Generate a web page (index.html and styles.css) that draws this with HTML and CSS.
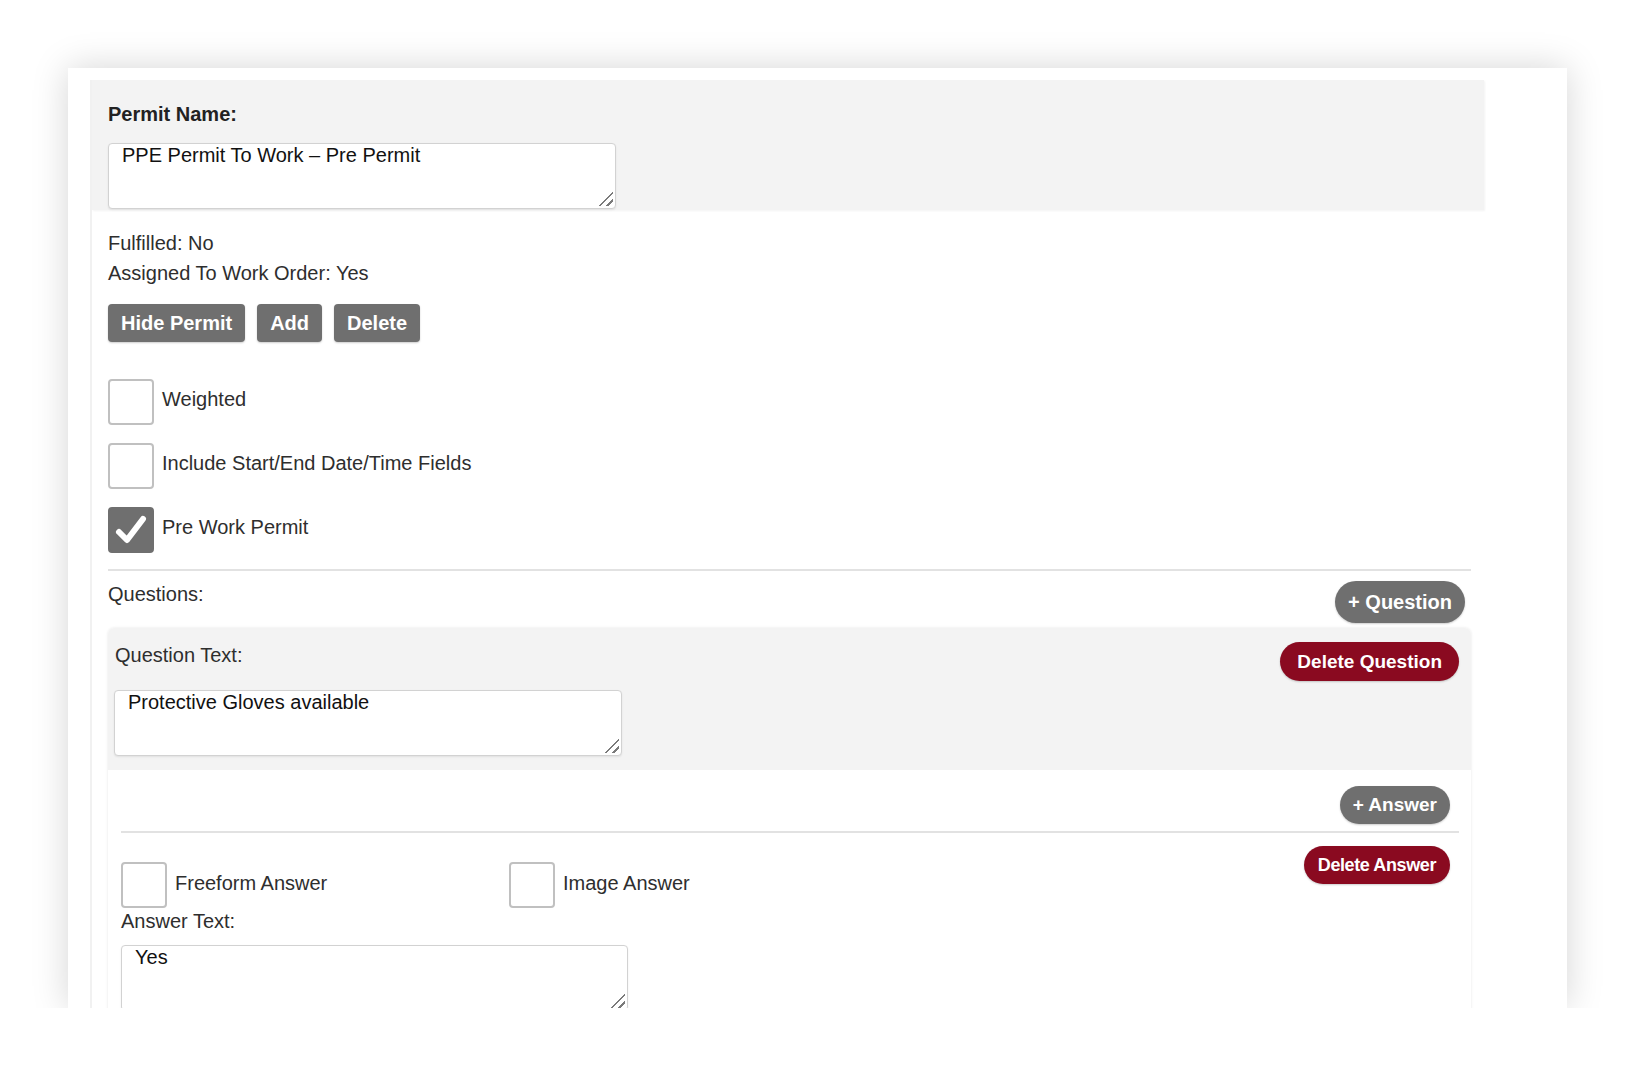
FILE: index.html
```html
<!DOCTYPE html>
<html lang="en">
    <head>
        <meta charset="UTF-8">
        <meta name="viewport" content="width=device-width, initial-scale=1.0">
        <title>Permit Editor</title>
        <link rel="stylesheet" href="styles.css">
    </head>
    <body>
        <div class="card">
            <div class="permit">
                <div class="permit-head">
                    <label class="field-label" for="permit-name">Permit Name:</label>
                    <div class="text-wrap">
                        <textarea id="permit-name" class="text-box">PPE Permit To Work – Pre Permit</textarea>
                    </div>
                </div>

                <div class="permit-body">
                    <p class="info">Fulfilled: No</p>
                    <p class="info">Assigned To Work Order: Yes</p>

                    <div class="actions">
                        <button class="btn">Hide Permit</button>
                        <button class="btn">Add</button>
                        <button class="btn">Delete</button>
                    </div>

                    <div class="options">
                        <label class="check"><span class="box"></span><span class="check-text">Weighted</span></label>
                        <label class="check"><span class="box"></span><span class="check-text">Include Start/End Date/Time Fields</span></label>
                        <label class="check">
                            <span class="box checked">
                                <svg viewBox="0 0 46 46" width="46" height="46"><path d="M11 25 L19 33 L35 12" fill="none" stroke="#fff" stroke-width="6" stroke-linecap="round" stroke-linejoin="round"/></svg>
                            </span>
                            <span class="check-text">Pre Work Permit</span>
                        </label>
                    </div>

                    <hr class="divider">

                    <div class="questions-head">
                        <span class="questions-title">Questions:</span>
                        <button class="pill pill-gray add-question">+ Question</button>
                    </div>

                    <!-- one question with its answers -->
                    <div class="question">
                        <div class="question-top">
                            <div class="question-row">
                                <span class="question-label">Question Text:</span>
                                <button class="pill pill-red delete-question">Delete Question</button>
                            </div>
                            <div class="text-wrap">
                                <textarea class="text-box">Protective Gloves available</textarea>
                            </div>
                        </div>

                        <div class="answers">
                            <div class="answers-head">
                                <button class="pill pill-gray add-answer">+ Answer</button>
                            </div>
                            <hr class="divider thin">

                            <div class="answer">
                                <div class="answer-main">
                                    <div class="answer-types">
                                        <label class="check answer-type"><span class="box"></span><span class="check-text">Freeform Answer</span></label>
                                        <label class="check answer-type"><span class="box"></span><span class="check-text">Image Answer</span></label>
                                    </div>
                                    <span class="answer-label">Answer Text:</span>
                                    <div class="text-wrap answer-text">
                                        <textarea class="text-box">Yes</textarea>
                                    </div>
                                </div>
                                <button class="pill pill-red delete-answer">Delete Answer</button>
                            </div>
                        </div>
                    </div>
                </div>
            </div>
        </div>
    </body>
</html>
```

FILE: styles.css
```css
/* Reset default styles */
* {
  margin: 0;
  padding: 0;
  box-sizing: border-box;
}

body {
  font-family: 'Liberation Sans', Arial, sans-serif;
  background-color: #ffffff;
  color: #2e2e2e;
  font-size: 20px;
  line-height: 23px;
  padding: 68px 0 0 68px;
}

/* Outer white sheet, content runs past the bottom */
.card {
  width: 1499px;
  height: 940px;
  background-color: #fff;
  box-shadow: 0 0 34px rgba(0, 0, 0, 0.17);
  overflow: hidden;
  padding-top: 12px;
}

.permit {
  width: 1394px;
  margin-left: 22px;
  border-left: 2px solid #f1f1f1;
  min-height: 960px;
}

.permit-head {
  background-color: #f3f3f3;
  box-shadow: 1px 1px 2px rgba(0, 0, 0, 0.05);
  padding: 23px 18px 1px 16px;
}

.field-label {
  display: block;
  font-weight: bold;
  color: #222;
  margin-bottom: 17px;
}

/* Textarea wrapper carries the resize grip */
.text-wrap {
  position: relative;
  width: 508px;
}

.text-wrap::after {
  content: '';
  position: absolute;
  right: 3px;
  bottom: 3px;
  width: 14px;
  height: 14px;
  pointer-events: none;
  background: linear-gradient(135deg,
    transparent 47%, #7a7a7a 47%, #7a7a7a 56%, transparent 56%,
    transparent 74%, #7a7a7a 74%, #7a7a7a 83%, transparent 83%);
}

.text-box {
  display: block;
  width: 100%;
  height: 66px;
  padding: 0 13px;
  border: 1px solid #d2d2d2;
  border-radius: 4px;
  box-shadow: 0 1px 2px rgba(0, 0, 0, 0.08);
  font-family: 'Liberation Sans', Arial, sans-serif;
  font-size: 20px;
  line-height: 23px;
  color: #111;
  background-color: #fff;
  outline: none;
  resize: none;
}

.permit-body {
  padding: 18px 13px 0 16px;
}

.info {
  line-height: 30px;
}

.actions {
  display: flex;
  gap: 12px;
  margin-top: 16px;
}

.btn {
  height: 38px;
  padding: 0 13px;
  background-color: #6f6f6f;
  color: #fff;
  border: none;
  border-radius: 4px;
  font-family: 'Liberation Sans', Arial, sans-serif;
  font-size: 20px;
  font-weight: bold;
  box-shadow: 0 1px 2px rgba(0, 0, 0, 0.2);
}

/* Checkbox rows */
.options {
  display: flex;
  flex-direction: column;
  gap: 18px;
  margin-top: 37px;
}

.check {
  display: flex;
  align-items: center;
  gap: 8px;
}

.check-text {
  margin-bottom: 6px;
}

.box {
  width: 46px;
  height: 46px;
  flex-shrink: 0;
  border: 2px solid #c0c0c0;
  border-radius: 4px;
  background-color: #fff;
}

.box.checked {
  background-color: #6f6f6f;
  border-color: #6f6f6f;
  position: relative;
}

.box.checked svg {
  position: absolute;
  top: -2px;
  left: -2px;
}

.divider {
  border: none;
  height: 2px;
  background-color: #e2e2e2;
  margin-top: 16px;
}

.questions-head {
  display: flex;
  justify-content: space-between;
  align-items: flex-start;
}

.questions-title {
  margin-top: 12px;
}

/* Rounded buttons */
.pill {
  border: none;
  color: #fff;
  font-family: 'Liberation Sans', Arial, sans-serif;
  font-weight: bold;
  border-radius: 22px;
  box-shadow: 0 1px 2px rgba(0, 0, 0, 0.2);
}

.pill-gray {
  background-color: #6f6f6f;
}

.pill-red {
  background-color: #8a0a20;
}

.add-question {
  height: 42px;
  padding: 0 13px;
  font-size: 20px;
  margin: 10px 6px 0 0;
}

.question {
  margin-top: 5px;
  border-radius: 6px 6px 0 0;
  box-shadow: 0 0 3px rgba(0, 0, 0, 0.1);
  min-height: 500px;
}

.question-top {
  background-color: #f3f3f3;
  border-radius: 6px 6px 0 0;
  padding: 14px 12px 14px 6px;
}

.question-row {
  display: flex;
  justify-content: space-between;
  align-items: flex-start;
  padding-left: 1px;
}

.question-label {
  margin-top: 2px;
}

.delete-question {
  height: 39px;
  padding: 0 17px;
  font-size: 19px;
}

.question-top .text-wrap {
  margin-top: 9px;
}

.answers {
  padding: 16px 12px 0 13px;
}

.answers-head {
  display: flex;
  justify-content: flex-end;
}

.add-answer {
  height: 38px;
  padding: 0 13px;
  font-size: 19px;
  margin-right: 9px;
}

.divider.thin {
  margin-top: 7px;
}

.answer {
  display: flex;
  justify-content: space-between;
  align-items: flex-start;
}

.answer-main {
  margin-top: 29px;
}

.answer-types {
  display: flex;
}

.answer-type {
  width: 388px;
}

.answer-type .check-text {
  margin-bottom: 3px;
}

.answer-label {
  display: block;
  margin-top: 2px;
}

.answer-text {
  margin-top: 12px;
  width: 507px;
}

.delete-answer {
  height: 38px;
  padding: 0 14px;
  font-size: 18px;
  letter-spacing: -0.4px;
  margin: 13px 9px 0 0;
}
```
